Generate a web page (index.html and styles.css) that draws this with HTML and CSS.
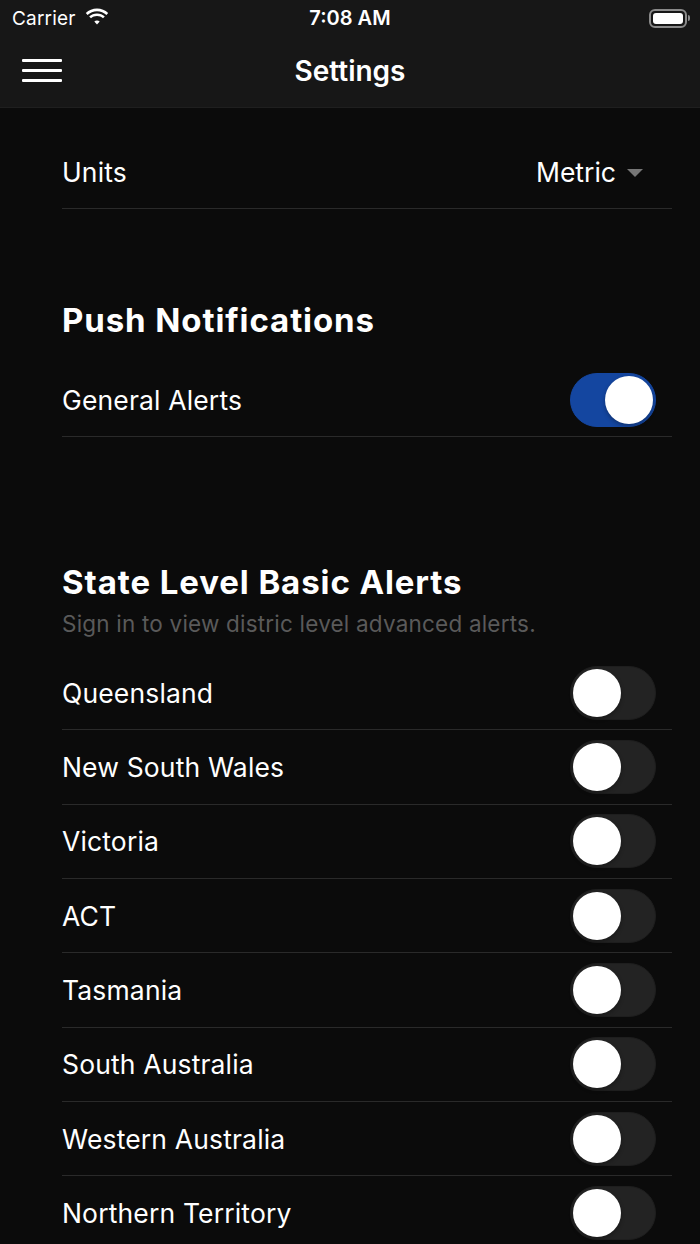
FILE: index.html
```html
<!DOCTYPE html>
<html>
<head>
<meta charset="utf-8">
<link rel="stylesheet" href="styles.css">
</head>
<body>
<header class="topbar">
  <div class="status">
    <div class="status-left">
      <span class="carrier">Carrier</span>
      <svg class="wifi" width="26" height="20" viewBox="0 0 26 20">
        <path d="M13 4.2c3.6 0 6.9 1.4 9.4 3.7l1.8-1.9C21.2 3.2 17.3 1.6 13 1.6S4.8 3.2 1.8 6l1.8 1.9C6.1 5.6 9.4 4.2 13 4.2z" fill="#fff"/>
        <path d="M13 9c2.3 0 4.4.9 6 2.3l1.8-1.9C18.7 7.6 16 6.4 13 6.4s-5.7 1.2-7.8 3l1.8 1.9C8.6 9.9 10.7 9 13 9z" fill="#fff"/>
        <path d="M13 13.6c1 0 2 .4 2.7 1L13 17.5l-2.7-2.9c.7-.6 1.7-1 2.7-1z" fill="#fff"/>
      </svg>
    </div>
    <div class="time">7:08 AM</div>
    <div class="status-right">
      <div class="battery"><div class="battery-fill"></div></div>
      <div class="battery-tip"></div>
    </div>
  </div>
  <nav class="navbar">
    <div class="menu">
      <span></span><span></span><span></span>
    </div>
    <div class="title">Settings</div>
  </nav>
</header>

<main class="content">
  <div class="row units-row">
    <span class="label">Units</span>
    <span class="select">Metric <span class="caret"></span></span>
  </div>

  <h2 class="heading push-heading">Push Notifications</h2>
  <div class="row">
    <span class="label">General Alerts</span>
    <span class="toggle on"><span class="knob"></span></span>
  </div>

  <h2 class="heading state-heading">State Level Basic Alerts</h2>
  <p class="sub">Sign in to view distric level advanced alerts.</p>

  <div class="list">
    <div class="row item"><span class="label">Queensland</span><span class="toggle"><span class="knob"></span></span></div>
    <div class="row item"><span class="label">New South Wales</span><span class="toggle"><span class="knob"></span></span></div>
    <div class="row item"><span class="label">Victoria</span><span class="toggle"><span class="knob"></span></span></div>
    <div class="row item"><span class="label">ACT</span><span class="toggle"><span class="knob"></span></span></div>
    <div class="row item"><span class="label">Tasmania</span><span class="toggle"><span class="knob"></span></span></div>
    <div class="row item"><span class="label">South Australia</span><span class="toggle"><span class="knob"></span></span></div>
    <div class="row item"><span class="label">Western Australia</span><span class="toggle"><span class="knob"></span></span></div>
    <div class="row item"><span class="label">Northern Territory</span><span class="toggle"><span class="knob"></span></span></div>
  </div>
</main>
</body>
</html>
```

FILE: styles.css
```css
* { box-sizing: border-box; }
html, body {
  margin: 0;
  padding: 0;
  background: #0b0b0b;
  color: #fff;
  font-family: Inter, "Noto Sans", sans-serif;
  width: 700px;
  height: 1244px;
  overflow: hidden;
}

.topbar {
  background: #171717;
  height: 108px;
  border-bottom: 1px solid #1f1f1f;
}

.status {
  height: 36px;
  display: flex;
  align-items: center;
  justify-content: space-between;
  padding: 0 10px 0 12px;
  position: relative;
}
.status-left {
  display: flex;
  align-items: center;
  gap: 8px;
}
.carrier {
  font-size: 19px;
  letter-spacing: 0.2px;
}
.wifi { margin-top: -2px; }
.time {
  position: absolute;
  left: 0;
  right: 0;
  text-align: center;
  font-size: 20px;
  font-weight: 600;
  pointer-events: none;
}
.status-right {
  display: flex;
  align-items: center;
}
.battery {
  width: 38px;
  height: 19px;
  border: 2px solid #8a8a8a;
  border-radius: 6px;
  padding: 2px;
}
.battery-fill {
  width: 100%;
  height: 100%;
  background: #fff;
  border-radius: 3px;
}
.battery-tip {
  width: 2px;
  height: 6px;
  background: #8a8a8a;
  border-radius: 0 2px 2px 0;
  margin-left: 1px;
}

.navbar {
  height: 71px;
  display: flex;
  align-items: center;
  position: relative;
  padding-left: 22px;
  padding-bottom: 2px;
}
.menu {
  display: flex;
  flex-direction: column;
  gap: 7px;
  width: 40px;
}
.menu span {
  display: block;
  height: 3px;
  background: #fff;
  border-radius: 1px;
}
.navbar .title {
  position: absolute;
  left: 0;
  right: 0;
  text-align: center;
  font-size: 28px;
  font-weight: 600;
  pointer-events: none;
}

.content {
  padding: 0 28px 0 62px;
}

.row {
  display: flex;
  align-items: center;
  justify-content: space-between;
  height: 74px;
  border-bottom: 1px solid #2a2a2a;
}
.label {
  font-size: 26.5px;
  font-weight: 400;
  letter-spacing: 0.15px;
}
.units-row {
  height: 101px;
  padding-top: 28px;
  padding-right: 29px;
}

.select {
  font-size: 26.5px;
  display: flex;
  align-items: center;
}
.caret {
  display: inline-block;
  width: 0;
  height: 0;
  border-left: 8px solid transparent;
  border-right: 8px solid transparent;
  border-top: 8px solid #777;
  margin-left: 11px;
  margin-top: 2px;
}

.heading {
  margin: 0;
  font-size: 33px;
  font-weight: 700;
  letter-spacing: 0.9px;
}
.push-heading {
  margin-top: 91px;
  line-height: 40px;
  margin-bottom: 23px;
}
.state-heading {
  margin-top: 125px;
  line-height: 40px;
}
.sub {
  margin: 7px 0 0;
  font-size: 22.5px;
  letter-spacing: 0.2px;
  color: #5a5a5a;
  line-height: 30px;
}

.list {
  margin-top: 17px;
}
.item {
  height: 74.33px;
}
.item:last-child { border-bottom: none; }

.toggle {
  width: 86px;
  height: 54px;
  border-radius: 27px;
  background: #232323;
  border: 1px solid #1e1e1e;
  position: relative;
  margin-right: 16px;
  display: flex;
  align-items: center;
  padding: 0 2px;
}
.knob {
  width: 48px;
  height: 48px;
  border-radius: 50%;
  background: #fff;
  box-shadow: 0 2px 4px rgba(0,0,0,0.3);
}
.toggle.on {
  background: #1446a0;
  border-color: #1446a0;
  justify-content: flex-end;
}
```
